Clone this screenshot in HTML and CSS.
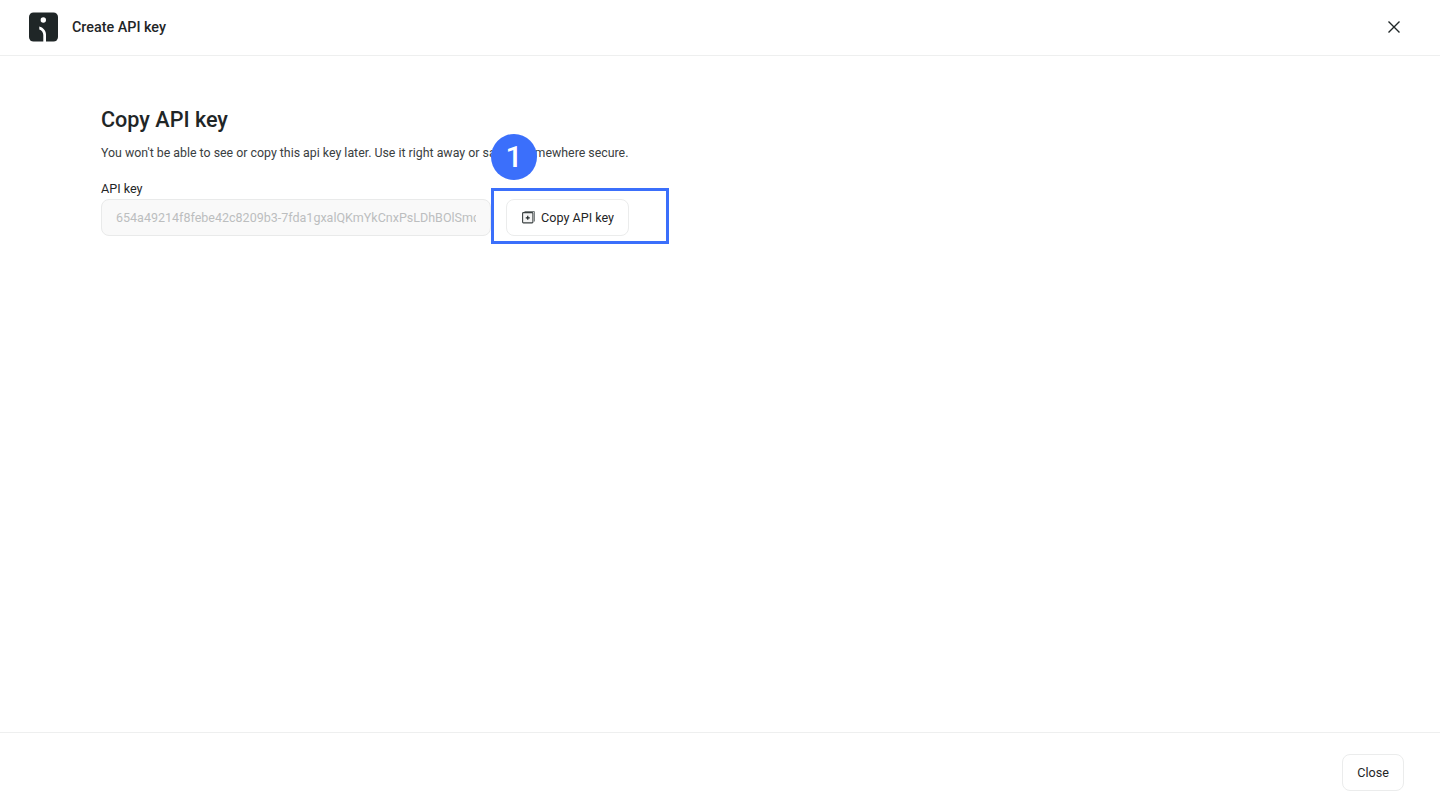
FILE: index.html
```html
<!DOCTYPE html>
<html lang="en">
<head>
<meta charset="utf-8">
<title>Create API key</title>
<link rel="stylesheet" href="styles.css">
</head>
<body>
<div class="page">
  <header class="topbar">
    <div class="brand">
      <svg class="logo" width="29" height="30" viewBox="0 0 29 30"><rect x="0" y="0.500" width="29" height="29" rx="4.500" fill="#1f2627"/><circle cx="14.300" cy="8" r="2.700" fill="#fff"/><path d="M10.300 14.500c3.800 1 6.700 4 6.700 8v7.500h-2.700v-7c0-2.700-1.700-4.600-4-5.500z" fill="#fff"/></svg>
      <span class="brand-title">Create API key</span>
    </div>
    <button class="icon-btn" aria-label="Close">
      <svg width="14" height="14" viewBox="0 0 14 14"><path d="M1.500 1.500l11 11M12.500 1.500l-11 11" stroke="#1f2627" stroke-width="1.400" fill="none"/></svg>
    </button>
  </header>
  <main class="content">
    <h1 class="heading">Copy API key</h1>
    <p class="lead">You won't be able to see or copy this api key later. Use it right away or save it somewhere secure.</p>
    <label class="field-label">API key</label>
    <div class="key-row">
      <div class="key-input"><span class="key-value">654a49214f8febe42c8209b3-7fda1gxalQKmYkCnxPsLDhBOlSmqTvZeW</span></div>
      <button class="btn btn-copy">
        <svg class="copy-icon" width="13" height="13" viewBox="0 0 13 13"><path d="M2.500 .6h9.900v9.900" fill="none" stroke="#6f7576" stroke-width="1"/><rect x="0.600" y="1.600" width="10.300" height="10.300" rx="0.800" fill="#f4f4f4" stroke="#3a4041" stroke-width="1.100"/><path d="M5.750 4.800v4M3.750 6.800h4" stroke="#1f2627" stroke-width="1.200"/></svg>
        Copy API key
      </button>
      <div class="highlight"></div>
      <div class="badge">1</div>
    </div>
  </main>
  <footer class="bottombar">
    <button class="btn btn-close">Close</button>
  </footer>
</div>
</body>
</html>
```
FILE: styles.css
```css
* { box-sizing: border-box; }
html, body { margin: 0; height: 100%; }
body { background: #fff; color: #1f2627; font-family: Roboto, "Liberation Sans", sans-serif; }
.page { height: 812px; display: flex; flex-direction: column; overflow: hidden; }
.topbar { height: 56px; flex: none; display: flex; align-items: center; justify-content: space-between; padding: 0 38px 1px 29px; border-bottom: 1px solid #eeefef; }
.brand { display: flex; align-items: center; gap: 14px; }
.logo { display: block; }
.brand-title { margin-top: 1px; font-size: 14.350px; font-weight: 500; line-height: 20px; }
.icon-btn { width: 16px; height: 16px; padding: 0; margin: 0; border: 0; background: none; display: flex; align-items: center; justify-content: center; }
.content { flex: 1; padding: 50px 0 0 101px; }
.heading { margin: 0; font-size: 21.600px; line-height: 28px; font-weight: 500; }
.lead { margin: 11px 0 0; font-size: 12.370px; line-height: 16px; color: #3a4041; }
.field-label { display: block; margin-top: 20px; font-size: 12.600px; line-height: 16px; color: #1f2627; }
.key-row { position: relative; display: flex; gap: 15px; margin-top: 2px; }
.key-input { width: 390px; height: 37px; padding: 0 14px; display: flex; align-items: center; background: #f9f9f9; border: 1px solid #e9eaea; border-radius: 8px; overflow: hidden; }
.key-value { display: block; width: 100%; overflow: hidden; white-space: nowrap; font-size: 12.530px; color: #bcbebf; }
.btn { height: 37px; display: flex; align-items: center; background: #fff; border: 1px solid #ebecec; border-radius: 8px; font-family: inherit; font-size: 12.600px; color: #1f2627; }
.btn-copy { width: 123px; padding: 0 0 0 15px; gap: 6px; }
.copy-icon { display: block; }
.btn-close { width: 62px; justify-content: center; padding: 0; }
.highlight { position: absolute; left: 390px; top: -11px; width: 178px; height: 56px; border: 3px solid #3b6ffb; }
.badge { position: absolute; left: 390px; top: -65px; width: 46px; height: 46px; border-radius: 50%; background: #3b6ffb; color: #fff; font-size: 30px; font-weight: 500; line-height: 46px; text-align: center; }
.bottombar { height: 80px; flex: none; display: flex; justify-content: flex-end; align-items: flex-start; padding: 21px 36px 0 0; border-top: 1px solid #eeefef; }
```
